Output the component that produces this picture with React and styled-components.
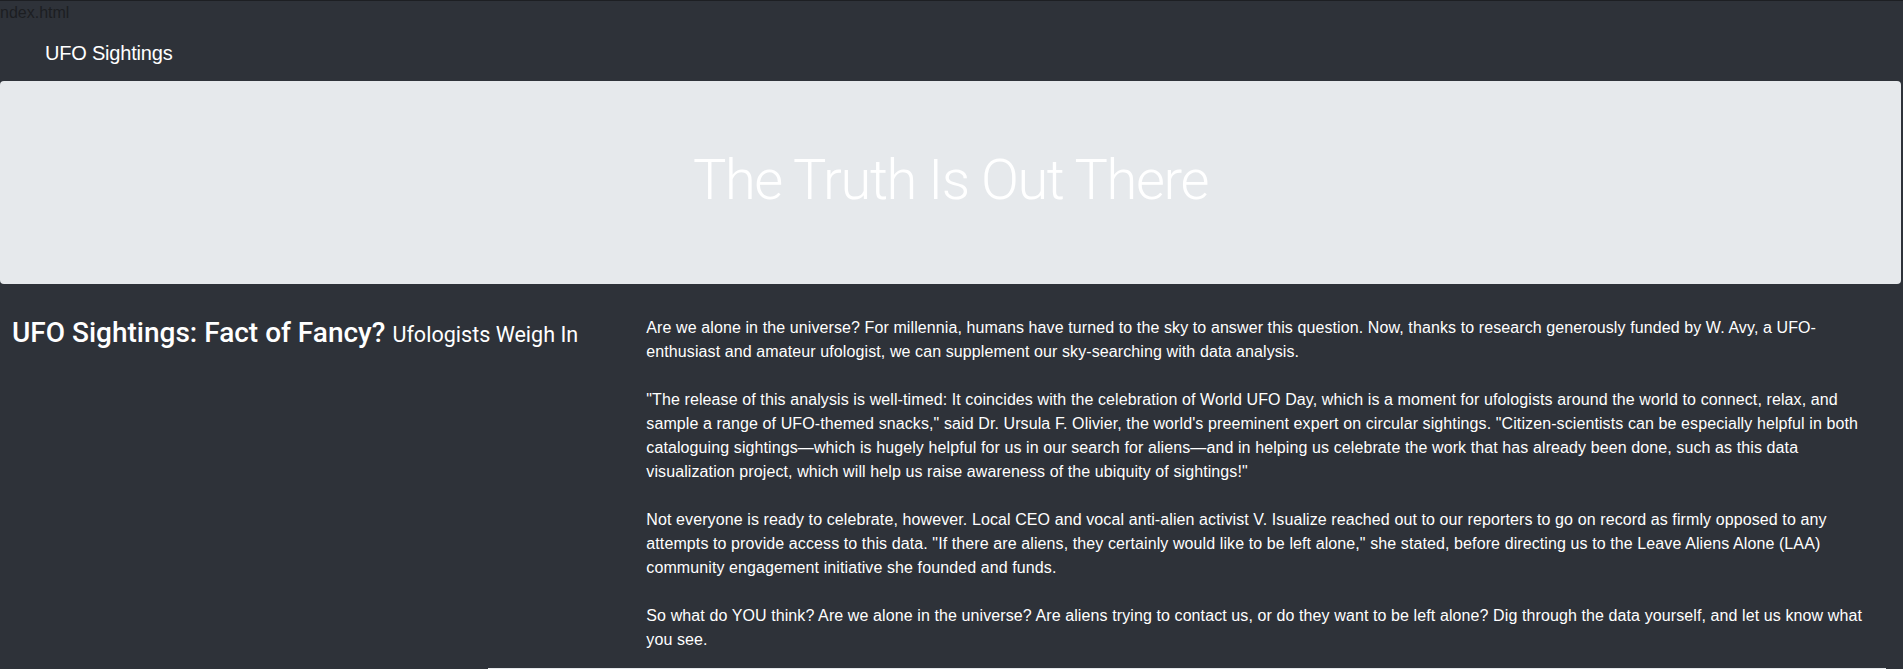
import styled, { createGlobalStyle } from "styled-components";

const GlobalStyle = createGlobalStyle`
  html, body {
    overflow: hidden;
  }
  body {
    margin: 0;
    background: #2e3239;
    border-top: 1px solid #1d1f23;
    color: #fff;
    font-family: "Liberation Sans", Helvetica, Arial, sans-serif;
    font-size: 16px;
    line-height: 24px;
  }
`;

const BrokenImage = styled.span`
  display: block;
  height: 24px;
  color: #1c1e22;
  font-size: 16px;
  line-height: 24px;
`;

const Navbar = styled.nav`
  display: flex;
  align-items: center;
  height: 56px;
  padding: 0 45px;
`;

const Brand = styled.a`
  color: #fff;
  font-size: 20px;
  line-height: 30px;
  padding: 5px 0;
  letter-spacing: -0.2px;
  text-decoration: none;
`;

const Jumbotron = styled.header`
  margin-right: 2px;
  padding: 66px 32px 62px;
  background: #e6e9ec;
  border-radius: 4px;
  text-align: center;
`;

const Display = styled.h1`
  margin: 0 0 8px;
  color: #fff;
  font-family: Roboto, "Liberation Sans", sans-serif;
  font-size: 56px;
  font-weight: 300;
  line-height: 1.2;
  letter-spacing: -1.4px;
`;

const Article = styled.section`
  display: grid;
  grid-template-columns: 1fr 2fr;
  padding-top: 32px;
`;

const Column = styled.div`
  padding: 0 ${(p) => (p.$wide ? "32px" : "12px")} 0 12px;
`;

const Heading = styled.h3`
  margin: 0;
  font-family: Roboto, "Liberation Sans", sans-serif;
  font-size: 28px;
  font-weight: 500;
  line-height: 1.2;
`;

const Small = styled.small`
  font-size: 77%;
  font-weight: 400;
`;

const Paragraph = styled.p`
  margin: 0 0 24px;
  letter-spacing: 0.1px;
  &:last-child {
    margin-bottom: 16px;
  }
`;

const FilterPanel = styled.div`
  width: 1398px;
  height: 1px;
  margin-left: 488px;
  background: #e6e9ec;
`;

export default function App() {
  return (
    <>
      <GlobalStyle />
      <BrokenImage>ndex.html</BrokenImage>
      <Navbar>
        <Brand href="#">UFO Sightings</Brand>
      </Navbar>
      <Jumbotron>
        <Display>The Truth Is Out There</Display>
      </Jumbotron>
      <Article>
        <Column>
          <Heading>
            UFO Sightings: Fact of Fancy? <Small>Ufologists Weigh In</Small>
          </Heading>
        </Column>
        <Column $wide>
          <Paragraph>
            Are we alone in the universe? For millennia, humans have turned to the sky to answer this
            question. Now, thanks to research generously funded by W. Avy, a UFO-enthusiast and amateur
            ufologist, we can supplement our sky-searching with data analysis.
          </Paragraph>
          <Paragraph>
            "The release of this analysis is well-timed: It coincides with the celebration of World UFO
            Day, which is a moment for ufologists around the world to connect, relax, and sample a range
            of UFO-themed snacks," said Dr. Ursula F. Olivier, the world's preeminent expert on circular
            sightings. "Citizen-scientists can be especially helpful in both cataloguing sightings—which
            is hugely helpful for us in our search for aliens—and in helping us celebrate the work that
            has already been done, such as this data visualization project, which will help us raise
            awareness of the ubiquity of sightings!"
          </Paragraph>
          <Paragraph>
            Not everyone is ready to celebrate, however. Local CEO and vocal anti-alien activist V.
            Isualize reached out to our reporters to go on record as firmly opposed to any attempts to
            provide access to this data. "If there are aliens, they certainly would like to be left
            alone," she stated, before directing us to the Leave Aliens Alone (LAA) community engagement
            initiative she founded and funds.
          </Paragraph>
          <Paragraph>
            So what do YOU think? Are we alone in the universe? Are aliens trying to contact us, or do
            they want to be left alone? Dig through the data yourself, and let us know what you see.
          </Paragraph>
        </Column>
      </Article>
      <FilterPanel />
    </>
  );
}
